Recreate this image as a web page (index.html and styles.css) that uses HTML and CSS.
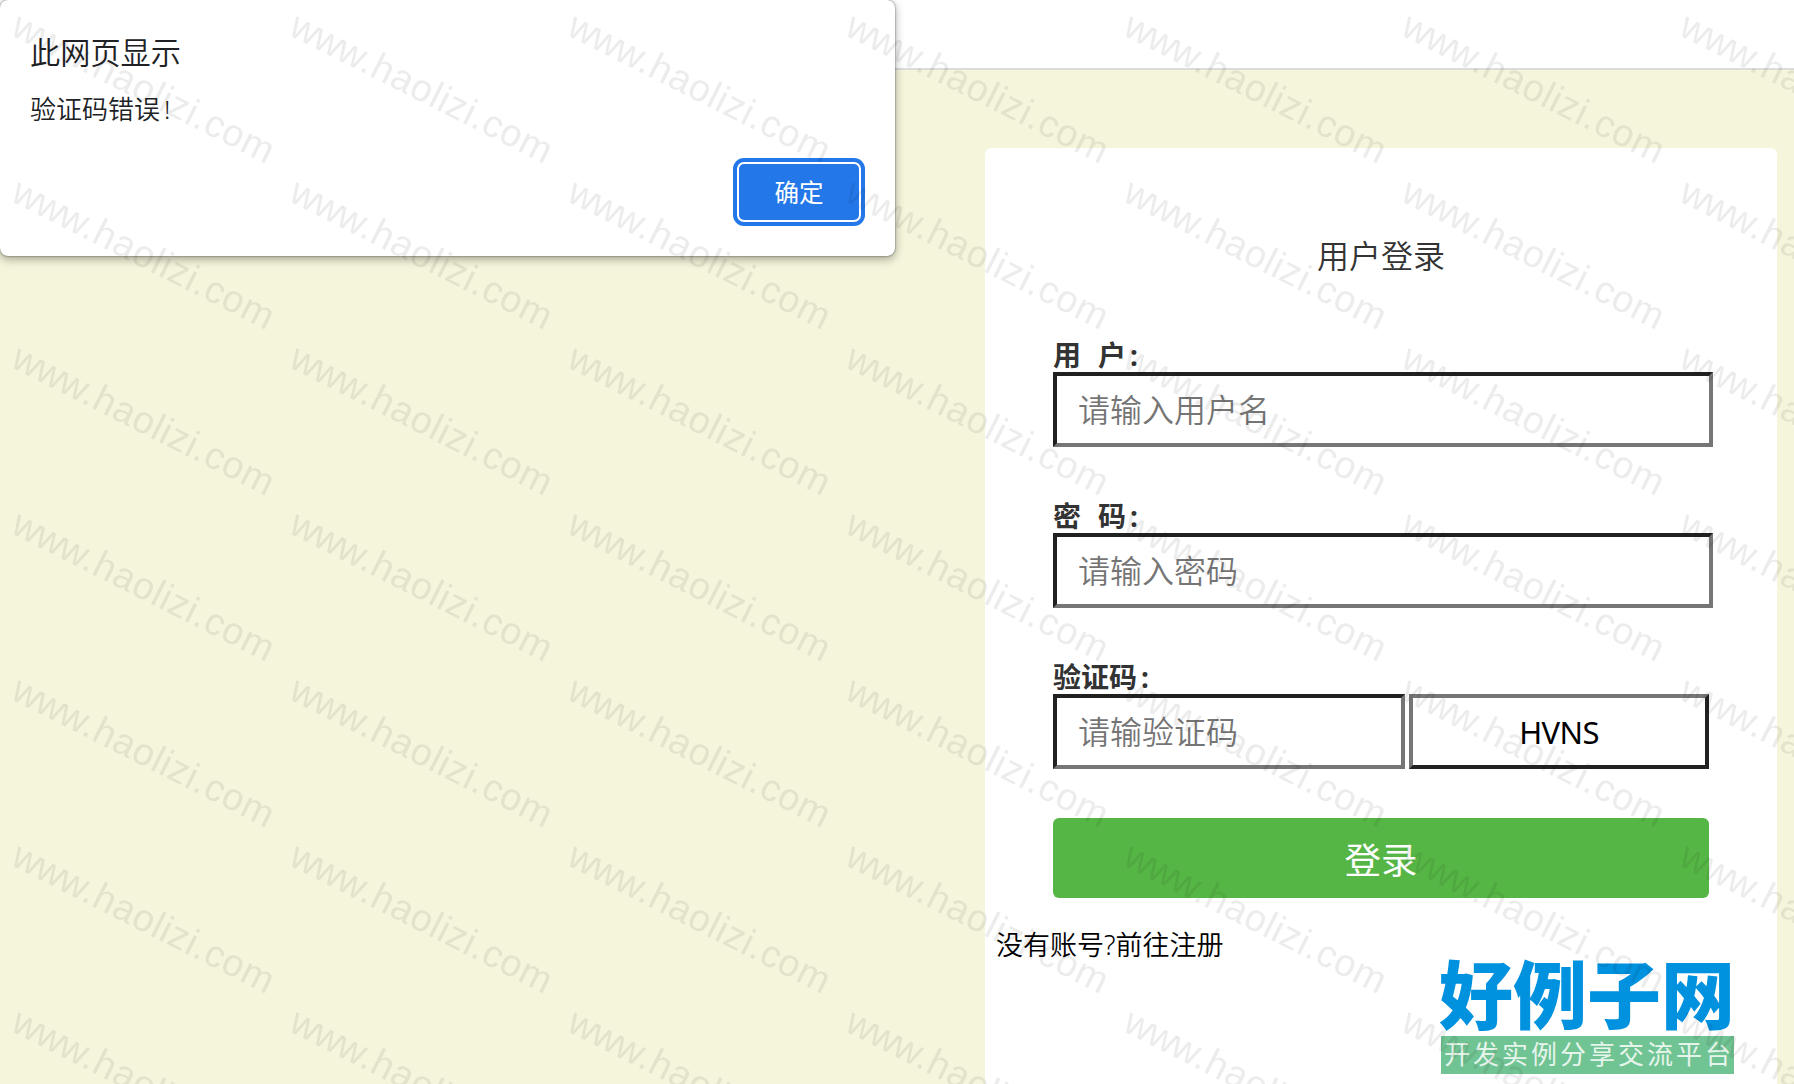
FILE: index.html
```html
<!DOCTYPE html>
<html lang="zh-CN">

<head>
    <meta charset="UTF-8">
    <meta name="viewport" content="width=device-width, initial-scale=1.0">
    <title>用户登录</title>
    <link rel="stylesheet" href="styles.css">
</head>

<body>
    <header class="top"></header>
    <main>
        <div class="login">
            <h1>用户登录</h1>
            <form class="form">
                <div class="item">
                    <label for="user">用<span class="gap"></span>户<span class="colon">:</span></label>
                    <input id="user" type="text" placeholder="请输入用户名">
                </div>
                <div class="item">
                    <label for="pwd">密<span class="gap"></span>码<span class="colon">:</span></label>
                    <input id="pwd" type="password" placeholder="请输入密码">
                </div>
                <div class="item">
                    <label for="code">验证码<span class="colon">:</span></label>
                    <div class="row">
                        <input id="code" type="text" placeholder="请输验证码">
                        <button type="button" class="code">HVNS</button>
                    </div>
                </div>
                <button type="button" class="submit">登录</button>
            </form>
            <a class="reg">没有账号?前往注册</a>
        </div>
    </main>

    <div class="dialog">
        <h2>此网页显示</h2>
        <p>验证码错误<span class="colon">!</span></p>
        <button type="button" class="ok">确定</button>
    </div>

    <div class="logo">
        <div class="name">好例子网</div>
        <div class="slogan">开发实例分享交流平台</div>
    </div>

    <svg class="mark">
        <defs>
            <pattern id="wm" width="278" height="166" patternUnits="userSpaceOnUse">
                <text transform="translate(9.3 34.3) rotate(26.8)"><tspan class="w">www</tspan>.haolizi.com</text>
            </pattern>
        </defs>
        <rect width="100%" height="100%" fill="url(#wm)" />
    </svg>
</body>

</html>
```

FILE: styles.css
```css
* {
    margin: 0;
    padding: 0;
    box-sizing: border-box;
}

body {
    height: 100vh;
    overflow: hidden;
    display: flex;
    flex-direction: column;
    background-color: #f5f5dc;
    font-family: "Noto Sans", "Noto Sans CJK SC", sans-serif;
}

input,
button {
    font-family: inherit;
    outline: none;
}

.top {
    height: 70px;
    flex-shrink: 0;
    background-color: #fff;
    border-bottom: 2px solid #dcdcdc;
}

main {
    flex: 1;
    display: flex;
    justify-content: flex-end;
    padding: 78px 17px 0 0;
}

.login {
    width: 792px;
    background-color: #fff;
    border-radius: 6px 6px 0 0;
    padding-top: 84px;
}

.login h1 {
    font-size: 32px;
    line-height: 48px;
    font-weight: 350;
    text-align: center;
    color: #333;
}

.form {
    padding: 58px 68px 0;
}

.item {
    margin-bottom: 52px;
}

.item label {
    display: block;
    height: 34px;
    line-height: 34px;
    font-size: 28px;
    font-weight: bold;
    color: #333;
}

.gap {
    display: inline-block;
    width: 17px;
}

.colon {
    margin-left: 4px;
}

.item input {
    display: block;
    width: 660px;
    height: 75px;
    padding: 0 21px;
    font-size: 32px;
    background-color: #fff;
    border: 4px solid;
    border-color: #212121 #767676 #767676 #212121;
}

.item input::placeholder {
    color: #757575;
    font-weight: 350;
}

.row {
    display: flex;
    gap: 4px;
}

.row input {
    width: 352px;
}

.row .code {
    width: 300px;
    height: 75px;
    font-size: 31px;
    letter-spacing: -0.6px;
    color: #000;
    background-color: #fff;
    border: 4px solid;
    border-color: #767676 #212121 #212121 #767676;
}

.submit {
    display: block;
    width: 656px;
    height: 80px;
    margin-top: -3px;
    font-size: 36.5px;
    color: #fff;
    background-color: #56b645;
    border: none;
    border-radius: 6px;
}

.reg {
    display: block;
    margin: 27px 0 0 11px;
    font-size: 27px;
    font-weight: 350;
    line-height: 40px;
    color: #000;
}

.dialog {
    position: absolute;
    left: 0;
    top: 0;
    width: 895px;
    height: 256px;
    padding: 31px 30px;
    background-color: #fff;
    border-radius: 8px;
    color: #202124;
    box-shadow: 0 0 2px rgba(0, 0, 0, 0.6), 0 3px 10px rgba(0, 0, 0, 0.35);
}

.dialog h2 {
    font-size: 30.2px;
    line-height: 44px;
    font-weight: 350;
}

.dialog p {
    margin-top: 14px;
    font-size: 26px;
    line-height: 40px;
    font-weight: 350;
}

.dialog .ok {
    display: block;
    width: 124px;
    height: 60px;
    margin: 33px 4px 0 auto;
    padding-bottom: 2px;
    font-size: 24.5px;
    color: #fff;
    background-color: #2377e8;
    border: 2px solid #fff;
    border-radius: 7px;
    box-shadow: 0 0 0 4px #2377e8;
}

.logo {
    position: absolute;
    left: 1441px;
    top: 956px;
    width: 293px;
}

.logo .name {
    height: 80px;
    line-height: 69px;
    margin-left: -2px;
    font-family: "Noto Sans CJK SC", sans-serif;
    font-size: 74px;
    font-weight: 900;
    white-space: nowrap;
    color: #0091df;
}

.logo .slogan {
    height: 38px;
    line-height: 36px;
    padding-left: 3px;
    font-size: 26px;
    letter-spacing: 3px;
    white-space: nowrap;
    color: #e6f5ec;
    background-color: #70c392;
}

.mark {
    position: absolute;
    left: 0;
    top: 0;
    width: 100%;
    height: 100%;
    pointer-events: none;
}

.mark text {
    font-family: "Liberation Sans", sans-serif;
    font-size: 38px;
    letter-spacing: 0.75px;
    fill: #000;
    fill-opacity: 0.075;
}

.mark .w {
    letter-spacing: -1px;
}
```
